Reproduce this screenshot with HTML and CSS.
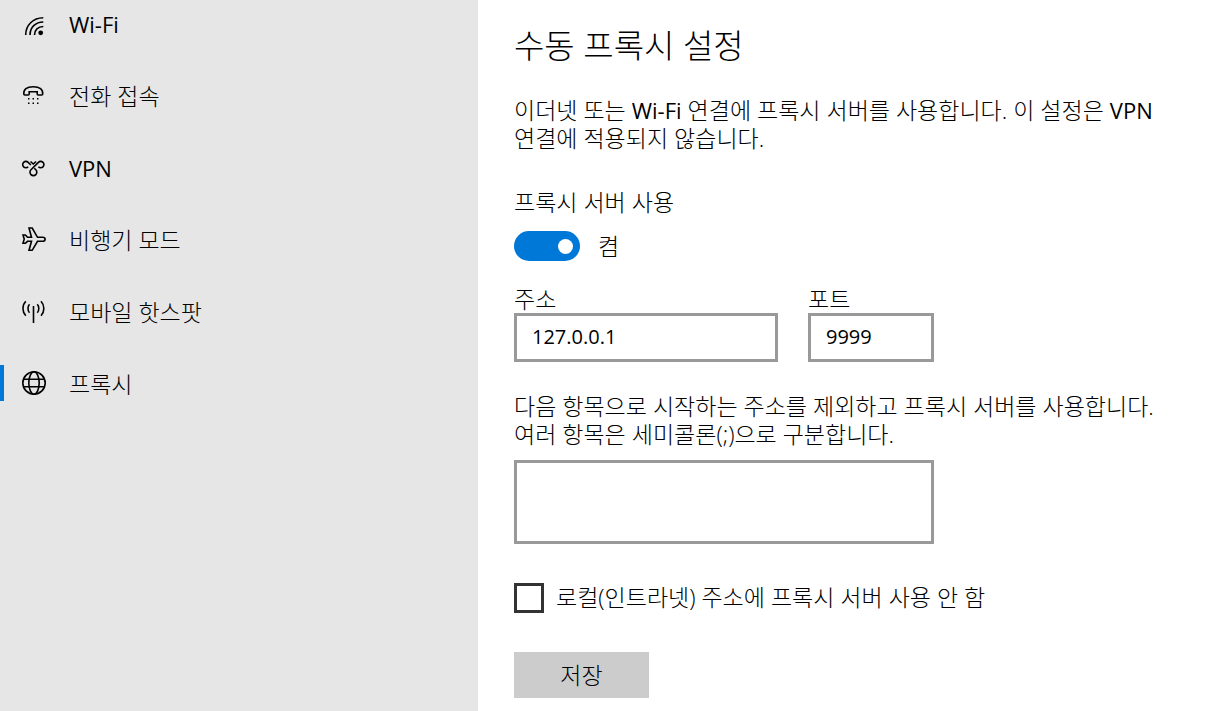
FILE: index.html
```html
<!DOCTYPE html>
<html lang="ko">
<head>
<meta charset="utf-8">
<meta name="viewport" content="width=device-width, initial-scale=1">
<title>프록시</title>
<link rel="stylesheet" href="styles.css">
</head>
<body>
<div class="settings">
  <nav class="sidebar">
    <a class="nav-item" href="#wifi">
      <svg class="icon" viewBox="0 0 24 24" aria-hidden="true"><path d="M3.700 24C3.700 14 11 7 21.300 6.800M8 24c0-7.500 5.500-13 13.300-13M12.500 24c0-5 3.500-8.500 8.800-8.500"/><circle class="solid" cx="18.700" cy="21.800" r="2.400"/></svg>
      <span class="latin">Wi-Fi</span>
    </a>
    <a class="nav-item" href="#dialup">
      <svg class="icon" viewBox="0 0 24 24" aria-hidden="true"><path d="M1.800 11C1.500 6.200 4.500 3.800 11.200 3.800S21 6.200 20.700 11c0 .6-.4 1-1 1h-3.500c-.6 0-1-.4-1-1V8.800h-8V11c0 .6-.4 1-1 1H2.800c-.6 0-1-.4-1-1z"/><path class="solid" d="M6 15h1.500v1.500H6zM10.500 15H12v1.500h-1.500zM15 15h1.500v1.500H15zM6 19.500h1.500V21H6zM10.500 19.500H12V21h-1.500zM15 19.500h1.500V21H15z"/></svg>
      <span>전화 접속</span>
    </a>
    <a class="nav-item" href="#vpn">
      <svg class="icon" viewBox="0 0 24 24" aria-hidden="true"><path d="M6.200 11.800a3.200 3.200 0 1 1 0-4.400l2.600 2.600M16.400 11.800a3.200 3.200 0 1 0 0-4.400l-7.400 7.400a3.400 3.400 0 1 0 4.800 0l-1.500-1.500M8.500 6.500l2.800 2.500 2.800-2.500"/></svg>
      <span class="latin">VPN</span>
    </a>
    <a class="nav-item" href="#airplane">
      <svg class="icon" viewBox="0 0 24 24" aria-hidden="true"><path d="M1 8h2.400l2.100 2.300h4L7 1h3.200l5.300 9.300h5.200c3.200 0 3.200 4 0 4h-5.200L10.200 23.300H7l2.500-9H5.500l-2.100 2H1l1.200-4.200z"/></svg>
      <span>비행기 모드</span>
    </a>
    <a class="nav-item" href="#hotspot">
      <svg class="icon" viewBox="0 0 24 24" aria-hidden="true"><path d="M11.500 7v17M7.500 5.300c-2 2.200-2 6.300 0 8.500M15.300 5.300c2 2.200 2 6.300 0 8.500M3.800 2.200c-3.800 4-3.800 10.500 0 14.500M19 2.200c3.800 4 3.800 10.500 0 14.500"/></svg>
      <span>모바일 핫스팟</span>
    </a>
    <a class="nav-item active" href="#proxy" aria-current="page">
      <svg class="icon" viewBox="0 0 24 24" aria-hidden="true"><circle cx="12" cy="12" r="11.200"/><ellipse cx="12" cy="12" rx="5.200" ry="11.200"/><path d="M1.500 8.300h21M1.500 15.700h21"/></svg>
      <span>프록시</span>
    </a>
  </nav>
  <main class="content">
    <h1 class="title">수동 프록시 설정</h1>
    <p class="text">이더넷 또는 <span class="latin">Wi-Fi</span> 연결에 프록시 서버를 사용합니다. 이 설정은 <span class="latin">VPN</span> 연결에 적용되지 않습니다.</p>
    <form class="form">
      <div class="toggle-group">
        <label for="use-proxy">프록시 서버 사용</label>
        <div class="toggle-row">
          <input class="toggle" type="checkbox" role="switch" id="use-proxy" checked>
          <span>켬</span>
        </div>
      </div>
      <div class="fields">
        <div class="field address">
          <label for="address">주소</label>
          <input class="box" type="text" id="address" value="127.0.0.1">
        </div>
        <div class="field port">
          <label for="port">포트</label>
          <input class="box" type="text" id="port" value="9999">
        </div>
      </div>
      <div class="exceptions">
        <label for="exceptions">다음 항목으로 시작하는 주소를 제외하고 프록시 서버를 사용합니다. 여러 항목은 세미콜론(;)으로 구분합니다.</label>
        <textarea class="box area" id="exceptions"></textarea>
      </div>
      <div class="check-row">
        <input class="check" type="checkbox" id="local">
        <label for="local">로컬(인트라넷) 주소에 프록시 서버 사용 안 함</label>
      </div>
      <button class="save" type="button">저장</button>
    </form>
  </main>
</div>
</body>
</html>
```
FILE: styles.css
```css
* {
  box-sizing: border-box;
}

body {
  margin: 0;
  background: #fff;
  color: #000;
  font: 300 23px/28px "Open Sans", "Noto Sans CJK KR", sans-serif;
  word-break: keep-all;
}

.settings {
  display: flex;
  min-height: 100vh;
}

.sidebar {
  display: flex;
  flex: 0 0 478px;
  flex-direction: column;
  gap: 36px;
  padding-top: 5px;
  background: #e6e6e6;
}

.nav-item {
  display: flex;
  align-items: center;
  gap: 23px;
  height: 36px;
  padding-left: 18px;
  border-left: 4px solid transparent;
  color: inherit;
  text-decoration: none;
}

.nav-item span {
  padding-top: 2px;
}

.active {
  border-left-color: #0078d7;
}

.icon {
  width: 24px;
  height: 24px;
  overflow: visible;
  fill: none;
  stroke: #000;
  stroke-width: 1.6;
}

.icon .solid {
  fill: #000;
  stroke: none;
}

.latin {
  font-size: 22px;
  font-weight: 400;
}

.content {
  flex: 1;
  padding: 24px 48px 12px 36px;
}

.title {
  margin: 0;
  font-size: 33px;
  font-weight: 300;
  line-height: 44px;
}

.text {
  margin: 28px 0 36px;
}

.form {
  display: flex;
  flex-direction: column;
  align-items: flex-start;
}

.toggle-row {
  display: flex;
  align-items: center;
  gap: 18px;
  margin-top: 15px;
}

.toggle {
  display: flex;
  align-items: center;
  justify-content: flex-end;
  width: 66px;
  height: 30px;
  margin: 0;
  padding: 0 7px;
  appearance: none;
  border-radius: 15px;
  background: #0078d7;
}

.toggle::before {
  width: 15px;
  height: 15px;
  border-radius: 50%;
  background: #fff;
  content: "";
}

.toggle:not(:checked) {
  justify-content: flex-start;
  background: #999;
}

.fields {
  display: flex;
  gap: 30px;
  margin-top: 24px;
}

.field {
  display: flex;
  flex-direction: column;
}

.address {
  width: 264px;
}

.port {
  width: 126px;
}

.box {
  width: 100%;
  height: 49px;
  padding: 0 15px 3px;
  border: 3px solid #999;
  border-radius: 0;
  background: #fff;
  color: #000;
  font: 400 20px/28px "Open Sans", "Noto Sans CJK KR", sans-serif;
}

.exceptions {
  margin-top: 30px;
}

.exceptions label {
  display: block;
}

.area {
  display: block;
  width: 420px;
  height: 84px;
  margin-top: 12px;
  resize: none;
}

.check-row {
  display: flex;
  align-items: center;
  gap: 12px;
  margin-top: 39px;
}

.check-row label {
  padding-bottom: 2px;
}

.check {
  width: 30px;
  height: 30px;
  margin: 0;
  appearance: none;
  border: 3px solid #333;
  background: #fff;
}

.check:checked {
  background: #0078d7;
}

.save {
  width: 135px;
  height: 46px;
  margin-top: 39px;
  padding: 0;
  border: 0;
  background: #ccc;
  color: inherit;
  font: inherit;
}
```
